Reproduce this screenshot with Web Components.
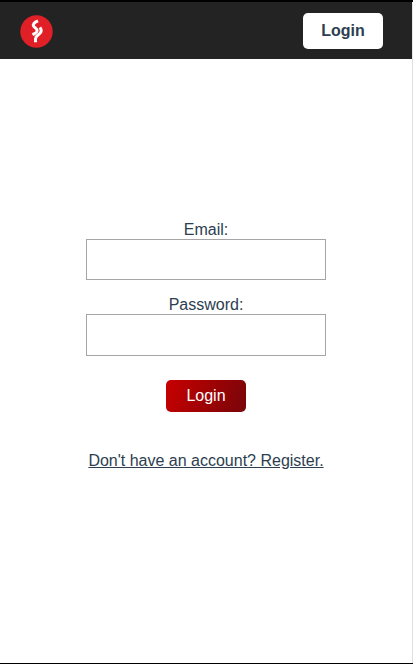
<!DOCTYPE html>
<html lang="en">
<head>
<meta charset="utf-8">
<meta name="viewport" content="width=device-width, initial-scale=1">
<title>Login</title>
<style>
    html, body {
        height: 100%;
        margin: 0;
    }
    body {
        background: #fff;
        color: #2c3e50;
        font-family: "Liberation Sans", Arial, sans-serif;
        font-size: 16px;
        line-height: 18px;
    }
</style>
</head>
<body>

<template id="app-shell">
    <style>
        :host {
            display: flex;
            flex-direction: column;
            box-sizing: border-box;
            height: 100vh;
            border-top: 2px solid #000;
            border-bottom: 1px solid #000;
        }
        .page {
            display: flex;
            flex: 1;
            flex-direction: column;
            align-items: center;
            padding-top: 162px;
            border-right: 1px solid #dedede;
        }
    </style>
    <slot name="header"></slot>
    <div class="page"><slot></slot></div>
</template>

<template id="nav-bar">
    <style>
        :host {
            display: flex;
            align-items: center;
            justify-content: space-between;
            box-sizing: border-box;
            height: 57px;
            padding: 0 29px 0 20px;
            background: #232323;
            border-right: 1px solid #e8e8e8;
        }
        brand-logo {
            margin-top: 2px;
        }
    </style>
    <brand-logo></brand-logo>
    <slot></slot>
</template>

<template id="brand-logo">
    <style>
        :host {
            display: block;
            width: 33px;
            height: 33px;
        }
        svg {
            display: block;
        }
    </style>
    <svg width="33" height="33" viewBox="0 0 33 33" fill="none" stroke="#fff" stroke-width="3">
        <circle cx="16.5" cy="16.5" r="16.2" fill="#e01f26" stroke="none"/>
        <path d="M18 5.8C14.4 7.2 12.6 9.2 13.7 11.2C14.7 13 17.3 13.3 17.1 15.8C16.9 18 14.8 18.4 12.5 19.8"/>
        <path d="M19.9 12.4C21.6 14.8 21.6 17.2 19.4 18.9C17.3 20.5 15.5 21.2 15.5 23.8V27.2"/>
    </svg>
</template>

<template id="action-button">
    <style>
        :host {
            display: block;
            width: 80px;
        }
        button {
            display: block;
            width: 100%;
            height: 32px;
            padding: 0;
            border: 0;
            border-radius: 5px;
            background: linear-gradient(110deg, #c80000, #780509);
            color: #fff;
            font: inherit;
            cursor: pointer;
        }
        :host([variant="light"]) button {
            height: 36px;
            background: #fff;
            color: #2c3e50;
            font-weight: bold;
        }
    </style>
    <button type="button"><slot></slot></button>
</template>

<template id="form-field">
    <style>
        :host {
            display: block;
            width: 240px;
            text-align: center;
        }
        label {
            display: block;
        }
        input {
            display: block;
            box-sizing: border-box;
            width: 100%;
            height: var(--field-height, 41px);
            padding: 0 10px;
            border: 1px solid #a5a5a5;
            border-radius: 0;
            background: #fff;
            font: inherit;
        }
    </style>
    <label for="field"><slot></slot></label>
    <input id="field">
</template>

<template id="login-form">
    <style>
        :host {
            display: flex;
            flex-direction: column;
            align-items: center;
        }
        .password {
            --field-height: 42px;
            margin-top: 16px;
        }
        action-button {
            margin-top: 24px;
        }
        a {
            margin-top: 40px;
            color: inherit;
            white-space: nowrap;
        }
    </style>
    <form-field type="email">Email:</form-field>
    <form-field class="password" type="password">Password:</form-field>
    <action-button>Login</action-button>
    <a href="#register"><slot></slot></a>
</template>

<app-shell>
    <nav-bar slot="header">
        <action-button variant="light">Login</action-button>
    </nav-bar>
    <login-form>Don't have an account? Register.</login-form>
</app-shell>

<script>
    class TemplateElement extends HTMLElement {
        constructor() {
            super();
            const template = document.getElementById(this.localName);
            this.attachShadow({mode: 'open'}).appendChild(template.content.cloneNode(true));
        }
    }

    class FormFieldElement extends TemplateElement {
        connectedCallback() {
            this.shadowRoot.querySelector('input').type = this.getAttribute('type') || 'text';
        }
    }

    customElements.define('brand-logo', class extends TemplateElement {});
    customElements.define('action-button', class extends TemplateElement {});
    customElements.define('form-field', FormFieldElement);
    customElements.define('nav-bar', class extends TemplateElement {});
    customElements.define('login-form', class extends TemplateElement {});
    customElements.define('app-shell', class extends TemplateElement {});
</script>
</body>
</html>
